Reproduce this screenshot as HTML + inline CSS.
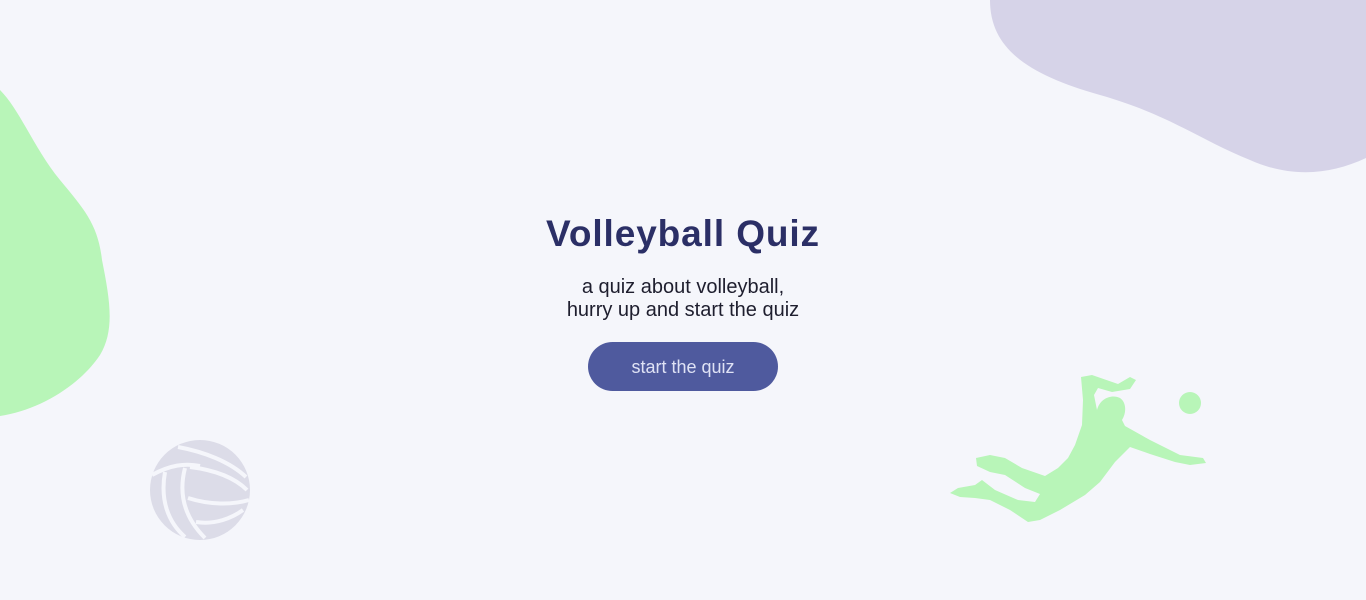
<!DOCTYPE html>
<html><head><style>
html,body{margin:0;padding:0;width:1366px;height:600px;overflow:hidden;background:#f5f6fb;font-family:"Liberation Sans",sans-serif;position:relative}
svg{position:absolute;left:0;top:0}
h1{position:absolute;left:0;width:1366px;top:213px;margin:0;text-align:center;font-size:37px;font-weight:bold;color:#2b2f66;letter-spacing:0.9px}
p{position:absolute;left:0;width:1366px;top:276px;margin:0;text-align:center;font-size:20px;line-height:23px;color:#1e1e2e}
.btn{position:absolute;left:588px;top:342px;width:190px;height:49px;border-radius:25px;background:#4f5a9e;color:#dfe2f5;font-size:18px;text-align:center;line-height:50px}
</style></head><body>
<svg width="1366" height="600" viewBox="0 0 1366 600">
<path d="M990 0 L1366 0 L1366 158 C1330 175 1290 178 1250 160 C1200 140 1170 115 1100 95 C1030 75 990 50 990 0Z" fill="#d6d3e8"/>
<path d="M0 90 C20 110 35 150 60 180 C85 210 98 225 102 260 C110 300 115 330 100 355 C80 385 40 410 0 416Z" fill="#b8f5b8"/>
<g fill="#b8f5b8">
<circle cx="1190" cy="403" r="11"/>
<path d="M1081 377 L1092 375 L1118 384 L1130 377 L1136 380 L1130 389 L1112 392 L1098 388 L1094 395 L1097 410 C1100 398 1112 394 1120 398 C1126 402 1127 412 1122 420 L1125 426 L1150 440 L1180 455 L1203 458 L1206 463 L1190 465 L1175 462 L1150 454 L1130 447 L1115 462 L1100 482 L1085 495 L1060 510 L1040 520 L1028 522 L1010 510 L990 500 L975 498 L960 497 L950 493 L958 488 L975 485 L982 480 L995 490 L1018 500 L1035 502 L1040 494 L1025 488 L1005 475 L990 472 L977 466 L976 458 L990 455 L1005 458 L1022 468 L1045 476 L1058 468 L1068 458 L1075 445 L1082 425 L1083 400Z"/>
</g>
<g>
<circle cx="200" cy="490" r="50" fill="#dcdce8"/>
<g fill="none" stroke="#f5f6fb" stroke-width="4">
<path d="M152 475 C170 465 185 463 200 466"/>
<path d="M178 447 C205 452 230 462 246 477"/>
<path d="M190 467 C215 470 235 478 247 490"/>
<path d="M165 472 C160 500 168 522 185 537"/>
<path d="M185 468 C178 495 185 518 205 538"/>
<path d="M188 498 C210 505 232 505 249 500"/>
<path d="M196 522 C215 525 232 518 243 510"/>
</g>
</g>
</svg>
<h1>Volleyball Quiz</h1>
<p>a quiz about volleyball,<br>hurry up and start the quiz</p>
<div class="btn">start the quiz</div>
</body></html>
